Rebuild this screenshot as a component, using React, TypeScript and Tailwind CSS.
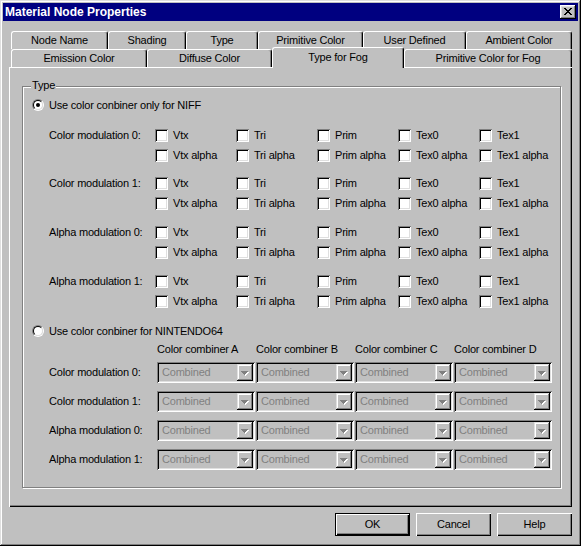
import React from "react";

const Check = ({ label }: { label: string }) => (
  <div className="flex items-center h-[13px] gap-[5px]">
    <span className="block shrink-0 w-[13px] h-[13px] bg-white shadow-[inset_1px_1px_0_#808080,inset_-1px_-1px_0_#ffffff,inset_2px_2px_0_#000000,inset_-2px_-2px_0_#dfdfdf]" />
    <span className="leading-[13px] whitespace-nowrap">{label}</span>
  </div>
);

const Radio = ({ checked }: { checked?: boolean }) => (
  <span className="block shrink-0 w-[12px] h-[12px] rounded-full border border-t-[#808080] border-l-[#808080] border-r-white border-b-white">
    <span className="flex w-[10px] h-[10px] rounded-full border border-t-black border-l-black border-r-[#dfdfdf] border-b-[#dfdfdf] bg-white items-center justify-center">
      {checked && <span className="block w-[4px] h-[4px] rounded-full bg-black" />}
    </span>
  </span>
);

const Arrow = () => (
  <svg width="16" height="17" viewBox="0 0 16 17" shapeRendering="crispEdges">
    <g fill="#ffffff">
      <rect x="5" y="8" width="7" height="1" />
      <rect x="6" y="9" width="5" height="1" />
      <rect x="7" y="10" width="3" height="1" />
      <rect x="8" y="11" width="1" height="1" />
    </g>
    <g fill="#808080">
      <rect x="4" y="7" width="7" height="1" />
      <rect x="5" y="8" width="5" height="1" />
      <rect x="6" y="9" width="3" height="1" />
      <rect x="7" y="10" width="1" height="1" />
    </g>
  </svg>
);

const Combo = () => (
  <div className="flex w-[98px] h-[21px] p-[2px] bg-[#c0c0c0] shadow-[inset_1px_1px_0_#808080,inset_-1px_-1px_0_#ffffff,inset_2px_2px_0_#000000,inset_-2px_-2px_0_#dfdfdf]">
    <div className="flex-1 flex items-center pl-[3px] text-[#808080] leading-[13px] whitespace-nowrap overflow-hidden">
      Combined
    </div>
    <div className="w-[16px] h-[17px] bg-[#c0c0c0] shadow-[inset_-1px_-1px_0_#000000,inset_1px_1px_0_#dfdfdf,inset_-2px_-2px_0_#808080,inset_2px_2px_0_#ffffff]">
      <Arrow />
    </div>
  </div>
);

const CheckGroup = ({ label, className }: { label: string; className: string }) => (
  <div className={"flex pl-[26px] " + className}>
    <div className="w-[108px] h-[13px] flex items-center leading-[13px] whitespace-nowrap">{label}</div>
    <div className="grid grid-cols-[repeat(5,81px)] gap-y-[7px]">
      <Check label="Vtx" />
      <Check label="Tri" />
      <Check label="Prim" />
      <Check label="Tex0" />
      <Check label="Tex1" />
      <Check label="Vtx alpha" />
      <Check label="Tri alpha" />
      <Check label="Prim alpha" />
      <Check label="Tex0 alpha" />
      <Check label="Tex1 alpha" />
    </div>
  </div>
);

const ComboRow = ({ label }: { label: string }) => (
  <div className="flex pl-[26px] h-[21px]">
    <div className="w-[108px] flex items-center leading-[13px] whitespace-nowrap">{label}</div>
    <div className="flex gap-[1px]">
      <Combo />
      <Combo />
      <Combo />
      <Combo />
    </div>
  </div>
);

const tabBase =
  "h-[18px] flex items-center justify-center whitespace-nowrap leading-[13px] border-l border-t border-r border-l-white border-t-white border-r-black rounded-t-[3px] shadow-[inset_-1px_0_0_#808080] bg-[#c0c0c0]";

const btnBase =
  "w-[75px] h-[23px] flex items-center justify-center bg-[#c0c0c0] leading-[13px]";

export default function App() {
  return (
    <div className="w-[581px] h-[546px] bg-[#c0c0c0] p-[3px] text-black text-[11px] tracking-[-0.2px] font-['Liberation_Sans',Arial,sans-serif] shadow-[inset_-1px_-1px_0_#000000,inset_1px_1px_0_#dfdfdf,inset_-2px_-2px_0_#808080,inset_2px_2px_0_#ffffff]">
      {/* Title bar */}
      <div className="h-[18px] bg-[#000080] flex items-center justify-between pl-[2px] pr-[2px]">
        <span className="text-white font-bold text-[12px] tracking-[0px] leading-[14px]">Material Node Properties</span>
        <div className="w-[16px] h-[14px] bg-[#c0c0c0] flex items-center justify-center shadow-[inset_-1px_-1px_0_#000000,inset_1px_1px_0_#ffffff,inset_-2px_-2px_0_#808080,inset_2px_2px_0_#dfdfdf]">
          <svg width="8" height="7" viewBox="0 0 8 7" shapeRendering="crispEdges" className="-mt-[1px] -ml-[1px]">
            <g fill="#000">
              <rect x="0" y="0" width="2" height="1" />
              <rect x="6" y="0" width="2" height="1" />
              <rect x="1" y="1" width="2" height="1" />
              <rect x="5" y="1" width="2" height="1" />
              <rect x="2" y="2" width="4" height="1" />
              <rect x="3" y="3" width="2" height="1" />
              <rect x="2" y="4" width="4" height="1" />
              <rect x="1" y="5" width="2" height="1" />
              <rect x="5" y="5" width="2" height="1" />
              <rect x="0" y="6" width="2" height="1" />
              <rect x="6" y="6" width="2" height="1" />
            </g>
          </svg>
        </div>
      </div>

      <div className="px-[6px]">
        {/* Tabs row 1 */}
        <div className="mt-[10px] ml-[2px] flex h-[18px]">
          <div className={tabBase + " w-[97px]"}>Node Name</div>
          <div className={tabBase + " w-[78px]"}>Shading</div>
          <div className={tabBase + " w-[72px]"}>Type</div>
          <div className={tabBase + " w-[105px]"}>Primitive Color</div>
          <div className={tabBase + " w-[103px]"}>User Defined</div>
          <div className={tabBase + " w-[106px]"}>Ambient Color</div>
        </div>
        {/* Tabs row 2 */}
        <div className="ml-[2px] flex items-start h-[18px]">
          <div className={tabBase + " w-[136px]"}>Emission Color</div>
          <div className={tabBase + " w-[125px]"}>Diffuse Color</div>
          <div className="relative z-10 -mt-[2px] w-[132px] h-[21px] pb-[2px] flex items-center justify-center whitespace-nowrap leading-[13px] border-l border-t border-r border-l-white border-t-white border-r-black rounded-t-[3px] shadow-[inset_-1px_0_0_#808080] bg-[#c0c0c0]">
            Type for Fog
          </div>
          <div className={tabBase + " w-[168px]"}>Primitive Color for Fog</div>
        </div>

        {/* Panel */}
        <div className="w-[563px] h-[440px] pt-[19px] pl-[13px] shadow-[inset_1px_1px_0_#ffffff,inset_-1px_-1px_0_#000000,inset_-2px_-2px_0_#808080]">
          <div className="relative w-[539px] h-[402px] border border-[#808080] shadow-[1px_1px_0_0_#ffffff,inset_1px_1px_0_0_#ffffff]">
            <span className="absolute -top-[8px] left-[8px] px-[1px] bg-[#c0c0c0] leading-[13px]">Type</span>

            <div className="mt-[12px] h-[12px] flex items-center pl-[9px] gap-[5px]">
              <Radio checked />
              <span className="leading-[13px] whitespace-nowrap">Use color conbiner only for NIFF</span>
            </div>

            <CheckGroup label="Color modulation 0:" className="mt-[18px]" />
            <CheckGroup label="Color modulation 1:" className="mt-[15px]" />
            <CheckGroup label="Alpha modulation 0:" className="mt-[16px]" />
            <CheckGroup label="Alpha modulation 1:" className="mt-[16px]" />

            <div className="mt-[17px] h-[12px] flex items-center pl-[9px] gap-[5px]">
              <Radio />
              <span className="leading-[13px] whitespace-nowrap">Use color conbiner for NINTENDO64</span>
            </div>

            <div className="mt-[6px] h-[13px] flex pl-[134px] leading-[13px] whitespace-nowrap">
              <div className="w-[99px]">Color combiner A</div>
              <div className="w-[99px]">Color combiner B</div>
              <div className="w-[99px]">Color combiner C</div>
              <div className="w-[99px]">Color combiner D</div>
            </div>

            <div className="mt-[6px] flex flex-col gap-[8px]">
              <ComboRow label="Color modulation 0:" />
              <ComboRow label="Color modulation 1:" />
              <ComboRow label="Alpha modulation 0:" />
              <ComboRow label="Alpha modulation 1:" />
            </div>
          </div>
        </div>

        {/* Buttons */}
        <div className="mt-[6px] flex justify-end gap-[6px]">
          <div className={btnBase + " border border-black shadow-[inset_1px_1px_0_#ffffff,inset_-1px_-1px_0_#000000,inset_-2px_-2px_0_#808080]"}>OK</div>
          <div className={btnBase + " shadow-[inset_1px_1px_0_#ffffff,inset_-1px_-1px_0_#000000,inset_-2px_-2px_0_#808080]"}>Cancel</div>
          <div className={btnBase + " shadow-[inset_1px_1px_0_#ffffff,inset_-1px_-1px_0_#000000,inset_-2px_-2px_0_#808080]"}>Help</div>
        </div>
      </div>
    </div>
  );
}
